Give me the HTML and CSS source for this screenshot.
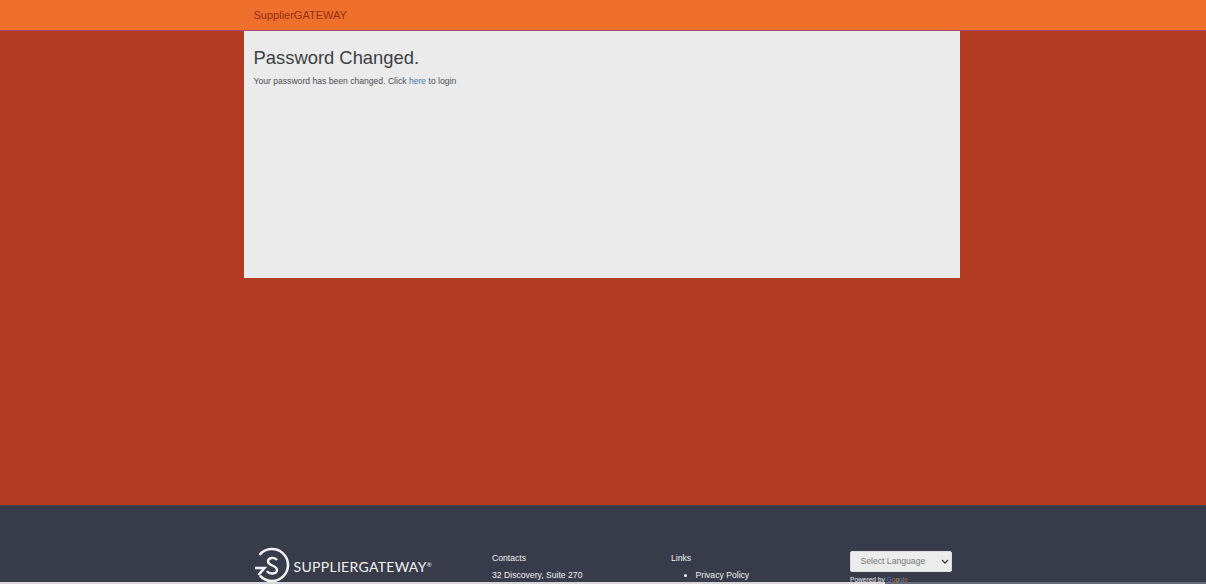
FILE: index.html
```html
<!DOCTYPE html>
<html lang="en">
<head>
<meta charset="utf-8">
<title>SupplierGATEWAY</title>
<link rel="stylesheet" href="styles.css">
</head>
<body>
<div class="page">
  <header class="navbar">
    <div class="wrap"><a class="brand" href="#">SupplierGATEWAY</a></div>
  </header>
  <main class="main">
    <div class="wrap panel">
      <h1>Password Changed.</h1>
      <p>Your password has been changed. Click <a href="#">here</a> to login</p>
    </div>
  </main>
  <footer class="footer">
    <div class="wrap footer-cols">
      <div class="logo">
        <svg class="logo-mark" viewBox="0 0 36 38" width="36" height="38" aria-hidden="true">
          <path d="M5.5 8A16 16 0 1 1 6 28.6" fill="none" stroke="#f2f2f2" stroke-width="2.6"/>
          <path d="M1 21H10.5L4.5 28" fill="none" stroke="#f2f2f2" stroke-width="2.6"/>
          <path d="M23 13C21 10 14 10 14 14.5C14 19 23 18 23 23C23 27.5 15 27.5 13 24" fill="none" stroke="#f2f2f2" stroke-width="2.4"/>
        </svg>
        <span class="logo-text">SUPPLIERGATEWAY<sup>®</sup></span>
      </div>
      <div class="col contacts">
        <div class="col-title">Contacts</div>
        <div class="col-line">32 Discovery, Suite 270</div>
      </div>
      <div class="col links">
        <div class="col-title">Links</div>
        <ul><li>Privacy Policy</li></ul>
      </div>
      <div class="translate">
        <div class="select-box">
          <select><option>Select Language</option></select>
          <svg class="chevron" viewBox="0 0 8 5" width="8" height="5" aria-hidden="true"><path d="M1 1L4 4L7 1" fill="none" stroke="#444" stroke-width="1.4"/></svg>
        </div>
        <div class="powered">Powered by <span class="g1">G</span><span class="g2">o</span><span class="g3">o</span><span class="g1">g</span><span class="g4">l</span><span class="g2">e</span></div>
      </div>
    </div>
  </footer>
  <div class="edge"></div>
</div>
</body>
</html>
```

FILE: styles.css
```css
* { box-sizing: border-box; }
html, body { margin: 0; height: 584px; overflow: hidden; }
body { font-family: "Liberation Sans", Arial, sans-serif; background: #b23c24; }
.page { height: 584px; display: flex; flex-direction: column; position: relative; overflow: hidden; }
.wrap { width: 716px; margin-left: 244px; }
.navbar { height: 31px; background: #ef702c; border-bottom: 1px solid #a84a6a; flex: none; }
.brand { display: block; padding: 8px 0 0 9.5px; font-size: 11px; line-height: 15px; color: #8f2f14; text-decoration: none; }
.main { height: 474px; flex: none; background: #b23c24; }
.panel { height: 246.5px; background: #ebebeb; padding: 15px 9.5px 0; }
.panel h1 { margin: 0; font-size: 18.4px; line-height: 23px; font-weight: 400; letter-spacing: 0; color: #3c4043; }
.panel p { margin: 4.5px 0 0; font-size: 8.6px; line-height: 14px; color: #4b4f53; }
.panel a { color: #3f78b5; text-decoration: none; }
.footer { flex: 1; background: #383b4a; border-top: 1px solid #4a3f48; color: #f0f0f0; }
.footer-cols { display: flex; padding: 41px 9px 0 9.5px; }
.logo { width: 238.5px; display: flex; align-items: flex-start; flex: none; }
.logo-mark { flex: none; }
.logo-text { margin: 10px 0 0 4px; font-family: "Lato", sans-serif; font-size: 14px; line-height: 20px; letter-spacing: 0.3px; color: #f2f2f2; white-space: nowrap; }
.logo-text sup { font-size: 6px; line-height: 0; vertical-align: 5px; }
.col { flex: none; width: 179px; font-size: 8.65px; line-height: 14px; color: #f0f0f0; }
.col-title { margin-top: 4px; }
.col-line { margin-top: 3px; }
.col ul { margin: 3px 0 0; padding: 0 0 0 24.5px; }
.translate { flex: none; width: 102px; margin-top: 3.5px; }
.select-box { position: relative; height: 21px; }
.select-box select { appearance: none; display: block; width: 102px; height: 21px; padding: 0 0 0 9.5px; font-family: "Liberation Sans", Arial, sans-serif; font-size: 8.65px; color: #777; background: #ececec; border: 1px solid #ddd; border-radius: 2px; }
.chevron { position: absolute; right: 3px; top: 8px; }
.powered { margin-top: 4px; font-size: 6.6px; line-height: 8px; color: #eee; white-space: nowrap; }
.g1 { color: #4a7fd0; }
.g2 { color: #c8504a; }
.g3 { color: #c8a040; }
.g4 { color: #4f9a5e; }
.edge { position: absolute; left: 0; right: 0; bottom: 0; height: 2px; background: linear-gradient(to right, #d8d8dc 0, #d8d8dc 885px, #6a6c78 885px, #6a6c78 100%); }
```
